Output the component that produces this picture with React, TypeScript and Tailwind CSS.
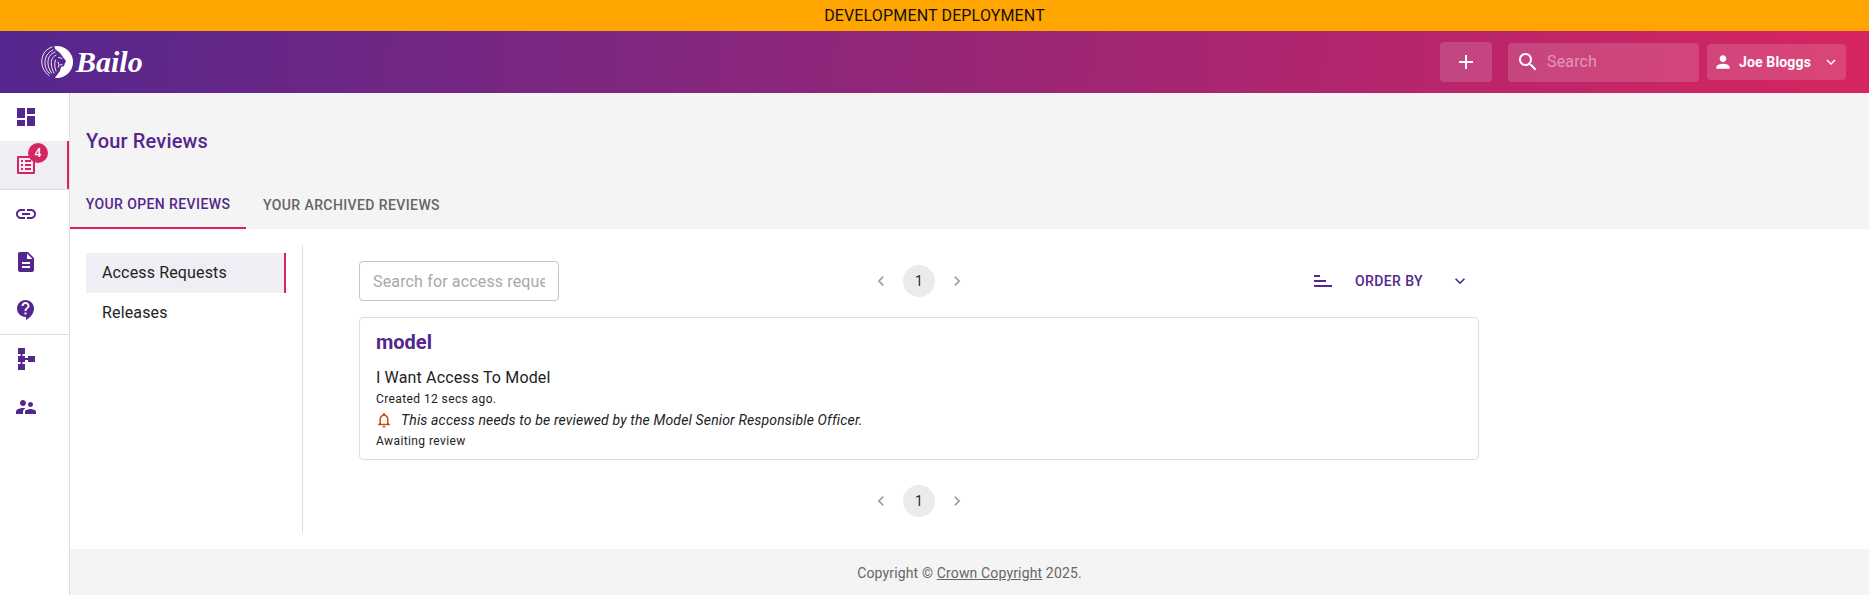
import type { ReactNode } from "react";

const FONT = "font-['Roboto','Liberation_Sans',sans-serif]";

const paths = {
  dashboard: "M3 13h8V3H3v10zm0 8h8v-6H3v6zm10 0h8V11h-8v10zm0-18v6h8V3h-8z",
  listAlt:
    "M19 5v14H5V5h14m1.1-2H3.9c-.5 0-.9.4-.9.9v16.2c0 .4.4.9.9.9h16.2c.4 0 .9-.5.9-.9V3.9c0-.5-.5-.9-.9-.9zM11 7h6v2h-6V7zm0 4h6v2h-6v-2zm0 4h6v2h-6zM7 7h2v2H7zm0 4h2v2H7zm0 4h2v2H7z",
  link: "M3.9 12c0-1.71 1.39-3.1 3.1-3.1h4V7H7c-2.76 0-5 2.24-5 5s2.24 5 5 5h4v-1.9H7c-1.71 0-3.1-1.39-3.1-3.1zM8 13h8v-2H8v2zm9-6h-4v1.9h4c1.71 0 3.1 1.39 3.1 3.1s-1.39 3.1-3.1 3.1h-4V17h4c2.76 0 5-2.24 5-5s-2.24-5-5-5z",
  description:
    "M14 2H6c-1.1 0-1.99.9-1.99 2L4 20c0 1.1.89 2 1.99 2H18c1.1 0 2-.9 2-2V8l-6-6zm2 16H8v-2h8v2zm0-4H8v-2h8v2zm-3-5V3.5L18.5 9H13z",
  support:
    "M11.5 2C6.81 2 3 5.81 3 10.5S6.81 19 11.5 19h.5v3c4.86-2.34 8-7 8-11.5C20 5.81 16.19 2 11.5 2zm1 14.5h-2v-2h2v2zm0-3.5h-2c0-3.25 3-3 3-5 0-1.1-.9-2-2-2s-2 .9-2 2h-2c0-2.21 1.79-4 4-4s4 1.79 4 4c0 2.5-3 2.75-3 5z",
  schema: "M14 9v2h-3V9H8.5V7H11V1H4v6h2.5v2H4v6h2.5v2H4v6h7v-6H8.5v-2H11v-2h3v2h7V9z",
  supervisor:
    "M16.5 12c1.38 0 2.49-1.12 2.49-2.5S17.88 7 16.5 7C15.12 7 14 8.12 14 9.5s1.12 2.5 2.5 2.5zM9 11c1.66 0 2.99-1.34 2.99-3S10.66 5 9 5C7.34 5 6 6.34 6 8s1.34 3 3 3zm7.5 3c-1.83 0-5.5.92-5.5 2.75V19h11v-2.25c0-1.83-3.67-2.75-5.5-2.75zM9 13c-2.33 0-7 1.17-7 3.5V19h7v-2.25c0-.85.33-2.34 2.37-3.47C10.5 13.1 9.66 13 9 13z",
  person: "M12 12c2.21 0 4-1.79 4-4s-1.79-4-4-4-4 1.79-4 4 1.79 4 4 4zm0 2c-2.67 0-8 1.34-8 4v2h16v-2c0-2.66-5.33-4-8-4z",
  search:
    "M15.5 14h-.79l-.28-.27C15.41 12.59 16 11.11 16 9.5 16 5.91 13.09 3 9.5 3S3 5.91 3 9.5 5.91 16 9.5 16c1.61 0 3.09-.59 4.23-1.57l.27.28v.79l5 4.99L20.49 19l-4.99-5zm-6 0C7.01 14 5 11.99 5 9.5S7.01 5 9.5 5 14 7.01 14 9.5 11.99 14 9.5 14z",
  add: "M19 13h-6v6h-2v-6H5v-2h6V5h2v6h6v2z",
  expand: "M16.59 8.59 12 13.17 7.41 8.59 6 10l6 6 6-6z",
  left: "M15.41 7.41 14 6l-6 6 6 6 1.41-1.41L10.83 12z",
  right: "M10 6 8.59 7.41 13.17 12l-4.58 4.59L10 18l6-6z",
  sort: "M3 18h6v-2H3v2zM3 6v2h18V6H3zm0 7h12v-2H3v2z",
  bell: "M12 22c1.1 0 2-.9 2-2h-4c0 1.1.9 2 2 2zm6-6v-5c0-3.07-1.63-5.64-4.5-6.32V4c0-.83-.67-1.5-1.5-1.5s-1.5.67-1.5 1.5v.68C7.64 5.36 6 7.92 6 11v5l-2 2v1h16v-1l-2-2zm-2 1H8v-6c0-2.48 1.51-4.5 4-4.5s4 2.02 4 4.5v6z",
};

function Icon({ d, className }: { d: string; className: string }) {
  return (
    <svg viewBox="0 0 24 24" fill="currentColor" className={className} aria-hidden="true">
      <path d={d} />
    </svg>
  );
}

function LionMark() {
  return (
    <svg viewBox="0 0 32 32" className="h-[32px] w-[32px] shrink-0" aria-hidden="true">
      <circle cx="16" cy="16" r="16" fill="#fff" />
      <path d="M13-1H-1v34h14l3-4 3-4 1-4 3-1 1-3 1-2-3-4-3-4-5-4z" fill="#58278c" />
      <g fill="none" stroke="#fff" strokeWidth="0.9" strokeLinecap="round">
        <path d="M11 1C5 3 1 8 .8 15c-.2 6 2.5 11 7.200 14.500" />
        <path d="M12 4C7 6 3.500 11 4 18c.3 3.500 1.800 7 4.500 9.500" />
        <path d="M14 6C9 8 6.500 12 7 18c.3 3 1.500 6 3.500 9" />
        <path d="M15 9c-3.500 2-5 5-4.700 9 .2 3 1 6 2.700 9" />
        <path d="M14.500 14c-1.200 3-1 7 .5 11" />
        <path d="M17.500 11.500l3.500.8" />
        <path d="M17 16c1 1.500 1 3 .5 5" />
        <path d="M21 18.500l-2 .5" />
      </g>
    </svg>
  );
}

function SideItem({ d, selected, badge }: { d: string; selected?: boolean; badge?: string }) {
  return (
    <div
      className={`relative flex h-[48px] items-center pl-[14px] ${
        selected ? "border-r-[2px] border-[#d62560] bg-[#f0eef5]" : ""
      }`}
    >
      <Icon d={d} className={`h-6 w-6 ${selected ? "text-[#d62560]" : "text-[#54278e]"}`} />
      {badge && (
        <span className="absolute left-[28px] top-[2px] flex h-5 w-5 items-center justify-center rounded-full bg-[#d62560] text-[12px] font-medium text-white">
          {badge}
        </span>
      )}
    </div>
  );
}

function Pagination() {
  return (
    <div className="flex items-center justify-center text-[#a0a0a0]">
      <Icon d={paths.left} className="h-5 w-5" />
      <span className="mx-[12px] flex h-8 w-8 items-center justify-center rounded-full bg-[#ebebeb] text-[14px] text-[#2b2b2b]">
        1
      </span>
      <Icon d={paths.right} className="h-5 w-5" />
    </div>
  );
}

function HeaderBox({ className, children }: { className: string; children: ReactNode }) {
  return <div className={`flex items-center rounded-[4px] bg-white/15 ${className}`}>{children}</div>;
}

export default function App() {
  return (
    <div className={`${FONT} flex h-[595px] w-[1869px] flex-col overflow-hidden bg-white`}>
      <div className="flex h-[31px] items-center justify-center bg-[#ffa500] text-[16px] tracking-[0.15px] text-[#111]">
        DEVELOPMENT DEPLOYMENT
      </div>

      <header className="flex h-[62px] items-center bg-[linear-gradient(95deg,#54278e,#d62560)] pl-[41px] pr-[23px]">
        <LionMark />
        <span className="ml-[3px] font-['Liberation_Serif',serif] text-[30px] font-bold italic leading-none text-white">
          Bailo
        </span>
        <HeaderBox className="ml-auto h-[40px] w-[52px] justify-center">
          <Icon d={paths.add} className="h-6 w-6 text-white" />
        </HeaderBox>
        <HeaderBox className="ml-[16px] h-[39px] w-[191px] pl-[8px]">
          <Icon d={paths.search} className="h-6 w-6 text-white" />
          <span className="ml-[7px] text-[16px] tracking-[0.15px] text-white/45">Search</span>
        </HeaderBox>
        <HeaderBox className="ml-[8px] h-[36px] w-[139px] pl-[6px]">
          <Icon d={paths.person} className="h-[20px] w-[20px] text-white" />
          <span className="ml-[6px] text-[14px] font-bold tracking-[0.15px] text-white">Joe Bloggs</span>
          <Icon d={paths.expand} className="ml-[11px] h-[18px] w-[18px] text-white" />
        </HeaderBox>
      </header>

      <div className="flex min-h-0 flex-1">
        <nav className="w-[70px] shrink-0 border-r border-[#dedede]">
          <SideItem d={paths.dashboard} />
          <SideItem d={paths.listAlt} selected badge="4" />
          <div className="border-t border-[#dedede]" />
          <SideItem d={paths.link} />
          <SideItem d={paths.description} />
          <SideItem d={paths.support} />
          <div className="border-t border-[#dedede]" />
          <SideItem d={paths.schema} />
          <SideItem d={paths.supervisor} />
        </nav>

        <main className="flex min-w-0 flex-1 flex-col">
          <section className="h-[136px] bg-[#f4f4f4]">
            <h1 className="pl-[16px] pt-[36px] text-[20px] font-medium leading-[24px] tracking-[0.15px] text-[#54278e]">
              Your Reviews
            </h1>
            <div className="mt-[28px] flex h-[48px] text-[14px] font-medium tracking-[0.4px]">
              <div className="flex w-[176px] items-center justify-center border-b-[2px] border-[#d62560] text-[#54278e]">
                YOUR OPEN REVIEWS
              </div>
              <div className="flex items-center pl-[17px] text-[#666]">YOUR ARCHIVED REVIEWS</div>
            </div>
          </section>

          <section className="flex flex-1 pl-[16px] pt-[16px]">
            <div className="h-[288px] w-[217px] border-r border-[#dedede] pt-[8px] text-[16px] tracking-[0.15px] text-[#222]">
              <div className="flex h-[40px] w-[200px] items-center border-r-[2px] border-[#d62560] bg-[#f0eef5] pl-[16px]">
                Access Requests
              </div>
              <div className="flex h-[40px] w-[200px] items-center pl-[16px]">Releases</div>
            </div>

            <div className="ml-[56px] w-[1120px] pt-[16px]">
              <div className="grid h-[40px] grid-cols-[1fr_auto_1fr] items-center">
                <input
                  readOnly
                  placeholder="Search for access requests"
                  className="h-[40px] w-[200px] rounded-[4px] border border-[#c4c4c4] px-[13px] text-[16px] tracking-[0.15px] outline-none placeholder:text-[#a8a8a8]"
                />
                <Pagination />
                <div className="mr-[9px] flex items-center justify-end text-[#54278e]">
                  <Icon d={paths.sort} className="h-6 w-6 -scale-y-100" />
                  <span className="ml-[20px] text-[14px] font-medium tracking-[0.4px]">ORDER BY</span>
                  <Icon d={paths.expand} className="ml-[27px] h-[20px] w-[20px]" />
                </div>
              </div>

              <article className="mt-[16px] h-[143px] rounded-[4px] border border-[#dedede] pl-[16px] pt-[11px]">
                <h2 className="text-[20px] font-bold leading-[26px] text-[#54278e]">model</h2>
                <p className="mt-[11px] text-[16px] leading-[24px] tracking-[0.15px] text-[#222]">I Want Access To Model</p>
                <p className="text-[12px] leading-[18px] tracking-[0.4px] text-[#222]">Created 12 secs ago.</p>
                <div className="mt-[1px] flex h-[22px] items-center text-[14px] italic tracking-[0.15px] text-[#222]">
                  <Icon d={paths.bell} className="-ml-[1px] h-[18px] w-[18px] text-[#c4500f]" />
                  <span className="ml-[8px]">This access needs to be reviewed by the Model Senior Responsible Officer.</span>
                </div>
                <p className="text-[12px] leading-[20px] tracking-[0.4px] text-[#222]">Awaiting review</p>
              </article>

              <div className="mt-[25px]">
                <Pagination />
              </div>
            </div>
          </section>

          <footer className="flex h-[46px] items-center justify-center bg-[#f4f4f4] pt-[3px] text-[14px] tracking-[0.15px] text-[#666]">
            <span>
              Copyright © <span className="underline">Crown Copyright</span> 2025.
            </span>
          </footer>
        </main>
      </div>
    </div>
  );
}
